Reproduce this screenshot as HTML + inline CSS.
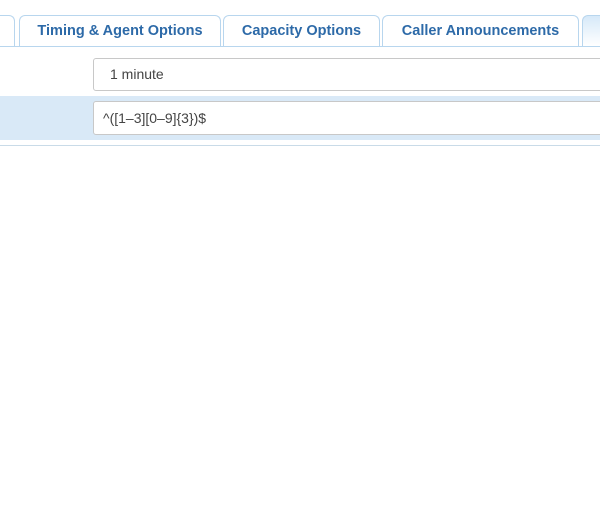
<!DOCTYPE html>
<html><head><meta charset="utf-8"><style>
html,body{margin:0;padding:0;background:#fff;width:600px;height:526px;overflow:hidden;font-family:"Liberation Sans",sans-serif;}
.tab{position:absolute;top:15px;height:31px;border:1px solid #b8d6ee;border-bottom:none;border-radius:6px 6px 0 0;background:#fff;box-sizing:border-box;color:#2d6aa8;font-weight:bold;font-size:14.5px;line-height:30px;text-align:center;}
.tabline{position:absolute;left:0;top:46px;width:600px;height:1px;background:#b8d6ee;}
.row2{position:absolute;left:0;top:96px;width:600px;height:44px;background:#d9e9f7;}
.inp{position:absolute;left:93px;width:520px;border:1px solid #c8c8c8;border-radius:3px;background:#fff;box-sizing:border-box;font-size:14px;color:#444;}
.bot{position:absolute;left:0;top:145px;width:600px;height:1px;background:#c9dbe8;}
</style></head><body>
<div class="tab" style="left:-10px;width:25px"></div>
<div class="tab" style="left:19px;width:202px">Timing &amp; Agent Options</div>
<div class="tab" style="left:223px;width:157px">Capacity Options</div>
<div class="tab" style="left:382px;width:197px">Caller Announcements</div>
<div class="tab" style="left:582px;width:40px;background:linear-gradient(#d6e9f9,#fff)"></div>
<div class="tabline"></div>
<div class="inp" style="top:58px;height:33px;line-height:31px;padding-left:16px">1 minute</div>
<div class="row2"></div>
<div class="inp" style="top:101px;height:34px;line-height:32px;padding-left:9px">^([1–3][0–9]{3})$</div>
<div class="bot"></div>
</body></html>
